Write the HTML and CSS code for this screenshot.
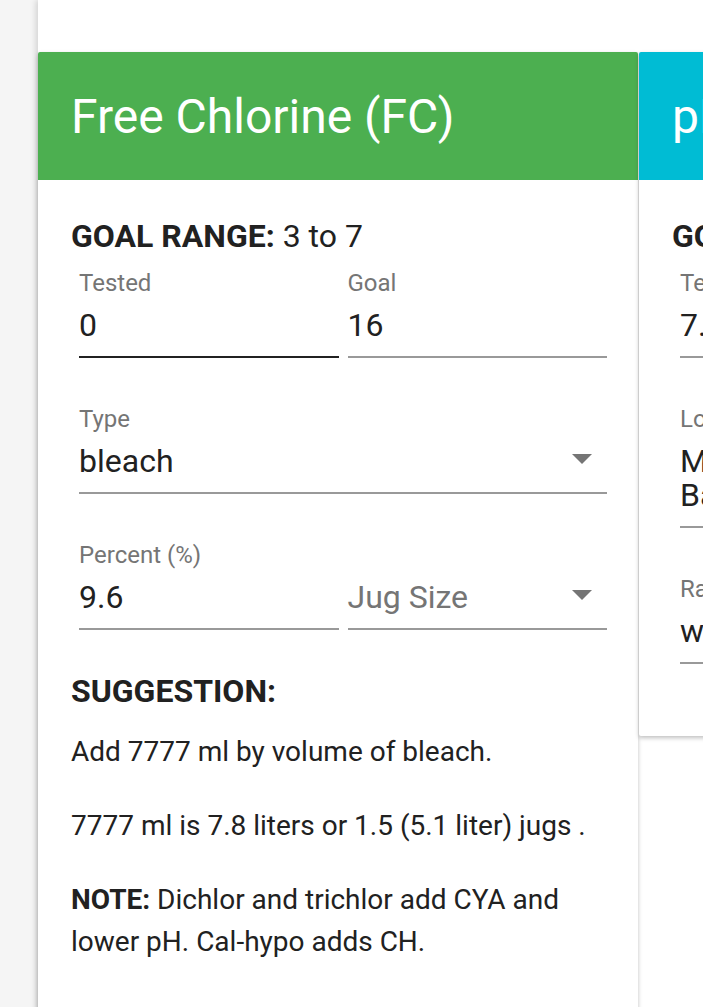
FILE: index.html
```html
<!DOCTYPE html>
<html lang="en">
<head>
  <meta charset="UTF-8">
  <meta name="viewport" content="width=device-width, initial-scale=1.0">
  <title>Pool Calculator</title>
  <link rel="stylesheet" href="styles.css">
</head>
<body>
  <div id="sheet">
    <div id="cards">

      <section class="card card-tall">
        <div class="card-header green">
          <h2>Free Chlorine (FC)</h2>
        </div>
        <div class="card-body">
          <div class="goal"><b>GOAL RANGE:</b> 3 to 7</div>
          <div class="row">
            <label class="field focused">
              <span class="field-label">Tested</span>
              <input type="text" value="0">
            </label>
            <label class="field">
              <span class="field-label">Goal</span>
              <input type="text" value="16">
            </label>
          </div>
          <div class="row">
            <div class="field select">
              <span class="field-label">Type</span>
              <div class="value">bleach</div>
            </div>
          </div>
          <div class="row">
            <label class="field">
              <span class="field-label">Percent (%)</span>
              <input type="text" value="9.6">
            </label>
            <div class="field select">
              <span class="field-label"></span>
              <div class="value placeholder">Jug Size</div>
            </div>
          </div>

          <h3>SUGGESTION:</h3>
          <p>Add 7777 ml by volume of bleach.</p>
          <p>7777 ml is 7.8 liters or 1.5 (5.1 liter) jugs .</p>
          <p><b>NOTE:</b> Dichlor and trichlor add CYA and lower pH. Cal-hypo adds CH.</p>
        </div>
      </section>

      <section class="card">
        <div class="card-header cyan">
          <h2>pH</h2>
        </div>
        <div class="card-body short">
          <div class="goal"><b>GOAL RANGE:</b> 7.2 to 7.8</div>
          <div class="row">
            <label class="field">
              <span class="field-label">Tested</span>
              <input type="text" value="7.5">
            </label>
            <label class="field">
              <span class="field-label">Goal</span>
              <input type="text" value="7.5">
            </label>
          </div>
          <div class="row">
            <div class="field select">
              <span class="field-label">Lower with</span>
              <div class="value">Muriatic Acid, 31.45% (20° Baume)</div>
            </div>
          </div>
          <div class="row">
            <div class="field select">
              <span class="field-label">Raise with</span>
              <div class="value">washing soda</div>
            </div>
          </div>
        </div>
      </section>

    </div>
  </div>
</body>
</html>
```

FILE: styles.css
```css
html, body {
    margin: 0;
    padding: 0;
    height: 100%;
    overflow: hidden;
}

body {
    font-family: Roboto, "Noto Sans", Arial, sans-serif;
    background-color: #f5f5f5;
    color: #212121;
}

#sheet {
    margin-left: 38px;
    min-height: 100%;
    background-color: #ffffff;
    box-shadow: -2px 0px 6px rgba(0, 0, 0, 0.15);
    padding-top: 52px;
}

#cards {
    display: flex;
    align-items: flex-start;
    gap: 1px;
}

.card {
    flex: 0 0 600px;
    background-color: #ffffff;
    border-radius: 2px;
    box-shadow: 0px 2px 4px rgba(0, 0, 0, 0.25);
    overflow: hidden;
}

.card-header {
    height: 128px;
    display: flex;
    align-items: center;
    padding: 0 33px;
}

.card-header h2 {
    margin: 0;
    color: #ffffff;
    font-size: 48px;
    font-weight: 400;
}

.green {
    background-color: #4caf50;
}

.cyan {
    background-color: #00bcd4;
}

.card-body {
    padding: 39px 31px 80px 33px;
}

.card-body.short {
    padding-bottom: 72px;
}

.goal {
    font-size: 32px;
    line-height: 34px;
}

.row {
    display: flex;
    gap: 9px;
    padding-left: 8px;
    margin-top: 48px;
}

.goal + .row {
    margin-top: 17px;
}

.field {
    flex: 1;
    display: flex;
    flex-direction: column;
    border-bottom: 2px solid #999999;
    padding-bottom: 14px;
    position: relative;
    min-width: 0;
}

.field.focused {
    border-bottom-color: #212121;
}

.field-label {
    font-size: 24px;
    line-height: 26px;
    height: 26px;
    color: #757575;
}

.field input,
.field .value {
    margin-top: 12px;
    border: none;
    outline: none;
    padding: 0;
    font-family: inherit;
    font-size: 32px;
    line-height: 34px;
    color: #212121;
    background: transparent;
    width: 100%;
}

.select .value {
    padding-right: 40px;
    box-sizing: border-box;
}

.select .placeholder {
    color: #757575;
}

.select::after {
    content: "";
    position: absolute;
    right: 15px;
    bottom: 28px;
    border-left: 10px solid transparent;
    border-right: 10px solid transparent;
    border-top: 10px solid #757575;
}

h3 {
    font-size: 32px;
    line-height: 40px;
    margin: 41px 0 20px 0;
}

p {
    font-size: 28px;
    line-height: 42px;
    margin: 0 0 32px 0;
}
```
